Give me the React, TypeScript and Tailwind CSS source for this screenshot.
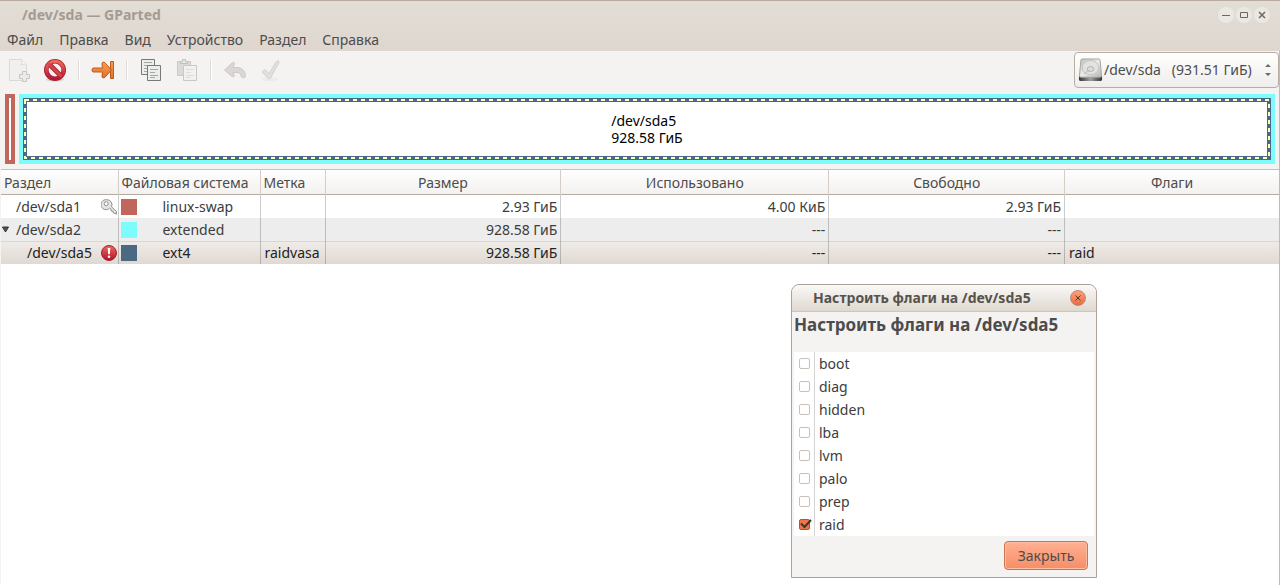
import { useState, type ReactNode } from 'react'

interface Partition {
  name: string
  fs: string
  color: string
  label: string
  size: string
  used: string
  free: string
  flags: string
  indent: string
  rowClass: string
  status?: 'locked' | 'error'
  expanded?: boolean
}

const menuItems = ['Файл', 'Правка', 'Вид', 'Устройство', 'Раздел', 'Справка']

const columns = [
  { title: 'Раздел', width: 'w-[117px]', align: 'text-left' },
  { title: 'Файловая система', width: 'w-[142px]', align: 'text-left' },
  { title: 'Метка', width: 'w-[65px]', align: 'text-left' },
  { title: 'Размер', width: 'w-[22%]', align: 'text-center' },
  { title: 'Использовано', width: 'w-[25%]', align: 'text-center' },
  { title: 'Свободно', width: 'w-[22%]', align: 'text-center' },
  { title: 'Флаги', width: 'w-[20%]', align: 'text-center' },
]

const partitions: Partition[] = [
  {
    name: '/dev/sda1',
    fs: 'linux-swap',
    color: 'bg-[#c1665a]',
    label: '',
    size: '2.93 ГиБ',
    used: '4.00 КиБ',
    free: '2.93 ГиБ',
    flags: '',
    indent: 'pl-[15px]',
    rowClass: 'bg-white',
    status: 'locked',
  },
  {
    name: '/dev/sda2',
    fs: 'extended',
    color: 'bg-[#7dfcfe]',
    label: '',
    size: '928.58 ГиБ',
    used: '---',
    free: '---',
    flags: '',
    indent: 'pl-1',
    rowClass: 'bg-[#ededed]',
    expanded: true,
  },
  {
    name: '/dev/sda5',
    fs: 'ext4',
    color: 'bg-[#4b6983]',
    label: 'raidvasa',
    size: '928.58 ГиБ',
    used: '---',
    free: '---',
    flags: 'raid',
    indent: 'pl-[26px]',
    rowClass: 'bg-linear-to-b from-[#f0ece8] to-[#e0d9d3] shadow-[inset_0_1px_0_#dcd6cd] text-[#222]',
    status: 'error',
  },
]

const flagNames = ['boot', 'diag', 'hidden', 'lba', 'lvm', 'palo', 'prep', 'raid']

function NewIcon() {
  return (
    <svg width="24" height="24" viewBox="0 0 24 24" fill="none" stroke="#dcdad8">
      <path d="M2.5 1.5h12l5 5v16h-17z" fill="#f1f0ef" />
      <path d="M14.5 1.5c1 2 .5 4-.5 5.500 2-1 4-1 5.500-.5" fill="#fafafa" />
      <path d="M15.500 13.500h4v3h3v4h-3v3h-4v-3h-3v-4h3z" fill="#ecebea" stroke="#c6c5c1" />
    </svg>
  )
}

function DeleteIcon() {
  return (
    <svg width="24" height="24" viewBox="0 0 24 24">
      <defs>
        <linearGradient id="ban" x1="0" y1="0" x2="0" y2="1">
          <stop offset="0" stopColor="#ee6a5a" />
          <stop offset="1" stopColor="#b51638" />
        </linearGradient>
      </defs>
      <ellipse cx="12" cy="21.500" rx="9" ry="2" fill="#d8d4d1" />
      <circle cx="12" cy="12" r="8.700" fill="#f4f1f0" stroke="#a82030" strokeWidth="4.600" />
      <path d="M6 6l12 12" stroke="#a82030" strokeWidth="4.600" />
      <circle cx="12" cy="12" r="8.700" fill="none" stroke="url(#ban)" strokeWidth="3" />
      <path d="M5.500 5.500l13 13" stroke="#d8424a" strokeWidth="3" />
    </svg>
  )
}

function ApplyResizeIcon() {
  return (
    <svg width="24" height="24" viewBox="0 0 24 24" stroke="#bf5a1c" strokeLinejoin="round">
      <defs>
        <linearGradient id="go" x1="0" y1="0" x2="0" y2="1">
          <stop offset="0" stopColor="#f5a04e" />
          <stop offset="1" stopColor="#e0702c" />
        </linearGradient>
      </defs>
      <path d="M19.500 3.500h3v17h-3z" fill="url(#go)" />
      <path
        d="M2 10h9.500l-.5-4c-.3-2 2-2.500 3-1.200L20.500 12 14 19.200c-1 1.300-3.300.8-3-1.200l.5-4H2c-1.300 0-1.300-4 0-4z"
        fill="url(#go)"
      />
    </svg>
  )
}

function CopyIcon() {
  return (
    <svg width="24" height="24" viewBox="0 0 24 24" fill="#eceeec" stroke="#777973">
      <path d="M2.500 1.500h13v15h-13z" />
      <path d="M5 4.500h8M5 7.500h8M5 10.500h4M5 13.500h4" stroke="#a5a7a3" />
      <path d="M8.500 7.500h13v15h-13z" />
      <path d="M11 11.500h8M11 14.500h5M11 17.500h8M11 19.500h5" stroke="#a5a7a3" />
    </svg>
  )
}

function PasteIcon() {
  return (
    <svg width="24" height="24" viewBox="0 0 24 24" fill="#dcd9d7" stroke="#cbc8c5">
      <path d="M2.500 3.500h13v14h-13z" />
      <path d="M5.500 5.500v-2h2v-2h3v2h2v2z" fill="#e9e7e5" stroke="#c0bdba" />
      <path d="M8.500 7.500h13v15h-13z" fill="#f2f1f0" stroke="#c9c8c5" />
      <path d="M11 11.500h8M11 14.500h5M11 17.500h8M11 19.500h5" stroke="#dedddb" />
    </svg>
  )
}

function UndoIcon() {
  return (
    <svg width="24" height="24" viewBox="0 0 24 24" fill="#dad6d4" stroke="#cdc9c6" strokeLinejoin="round">
      <path d="M1.500 12l8-7.500c2-.5 2.500 1 1.500 2.500L10 9.500h4c5 0 8 3.500 8.500 8 0 3-4 3-4.500.5-.5-2.500-1.500-3.500-4-3.500H10l1 2c1 1.500 0 3-2 2z" />
    </svg>
  )
}

function ApplyIcon() {
  return (
    <svg width="24" height="24" viewBox="0 0 24 24" fill="#e2e0de" stroke="#d3d0ce" strokeLinejoin="round">
      <ellipse cx="11" cy="21" rx="8" ry="2" fill="#ecebe9" stroke="none" />
      <path d="M3 14l3-2.500 4 4L17.500 3.500c1-1.500 3-.5 2.500 1L11.500 20c-.5 1-2 1-2.500.2z" />
    </svg>
  )
}

function DiskIcon() {
  return (
    <svg width="25" height="26" viewBox="0 0 26 26" aria-hidden="true">
      <defs>
        <linearGradient id="disk" x1="0" y1="0" x2="1" y2="1">
          <stop offset="0" stopColor="#bdbdbb" />
          <stop offset=".5" stopColor="#ececeb" />
          <stop offset="1" stopColor="#b4b4b2" />
        </linearGradient>
        <linearGradient id="base" x1="0" y1="0" x2="1" y2="0">
          <stop offset="0" stopColor="#333" />
          <stop offset=".5" stopColor="#a0a09e" />
          <stop offset="1" stopColor="#333" />
        </linearGradient>
      </defs>
      <path d="M1 19v4c0 1 .5 1.500 1.500 1.500h21c1 0 1.500-.5 1.500-1.500v-4z" fill="url(#base)" />
      <path d="M4.500 1.500h17c1 0 1.500.5 1.500 1.500l1.500 16c0 1-.5 1.500-1.500 1.500H3c-1 0-1.500-.5-1.500-1.500L3 3c0-1 .5-1.500 1.500-1.500z" fill="url(#disk)" stroke="#a3a3a1" />
      <ellipse cx="13" cy="10.500" rx="8.500" ry="7.500" fill="#e2e2e1" stroke="#c2c2c0" />
      <ellipse cx="13" cy="12" rx="3.500" ry="2.500" fill="#ddd" stroke="#b0b0ae" />
      <path d="M6 17l6-4" stroke="#bbb" />
    </svg>
  )
}

function KeyIcon() {
  return (
    <svg width="16" height="16" viewBox="0 0 16 16" role="img" aria-label="locked">
      <path
        d="M5.500.7a5 5 0 1 0 3 8.500l1.500 1 .2 1.800 1.800.2.300 1.800 1.700.3 1.300 1 .2-2.800-5-4.700A5 5 0 0 0 5.500.7z"
        fill="#e6e6e5"
        stroke="#8f8f8c"
      />
      <circle cx="5.200" cy="4.700" r="2" fill="#fff" stroke="#8f8f8c" />
    </svg>
  )
}

function ErrorIcon() {
  return (
    <svg width="16" height="16" viewBox="0 0 16 16" role="img" aria-label="error">
      <defs>
        <linearGradient id="err" x1="0" y1="0" x2="0" y2="1">
          <stop offset="0" stopColor="#ef6a60" />
          <stop offset="1" stopColor="#b3102b" />
        </linearGradient>
      </defs>
      <circle cx="8" cy="8" r="7.500" fill="url(#err)" stroke="#a3252d" />
      <path d="M6.700 3h2.600l-.5 6.200H7.200z" fill="#fff" />
      <circle cx="8" cy="11.700" r="1.300" fill="#fff" />
    </svg>
  )
}

function ToolButton({ label, disabled, children }: { label: string; disabled?: boolean; children: ReactNode }) {
  return (
    <button type="button" aria-label={label} disabled={disabled} className="p-1.5">
      {children}
    </button>
  )
}

function Separator() {
  return <div className="mx-[5px] h-5 w-0.5 border-r border-l border-r-white border-l-[#dedad7]" />
}

function WindowButton({ label, children }: { label: string; children: ReactNode }) {
  return (
    <button
      type="button"
      aria-label={label}
      className="flex size-4 items-center justify-center rounded-full bg-[#ebe7e2]"
    >
      <svg width="8" height="8" viewBox="0 0 8 8" fill="none" stroke="#6d6861">
        {children}
      </svg>
    </button>
  )
}

function Toolbar() {
  return (
    <div className="flex items-center justify-between py-px">
      <div className="flex items-center">
        <ToolButton label="Новый" disabled>
          <NewIcon />
        </ToolButton>
        <ToolButton label="Удалить">
          <DeleteIcon />
        </ToolButton>
        <Separator />
        <ToolButton label="Изменить размер">
          <ApplyResizeIcon />
        </ToolButton>
        <Separator />
        <ToolButton label="Копировать">
          <CopyIcon />
        </ToolButton>
        <ToolButton label="Вставить" disabled>
          <PasteIcon />
        </ToolButton>
        <Separator />
        <ToolButton label="Отменить" disabled>
          <UndoIcon />
        </ToolButton>
        <ToolButton label="Применить" disabled>
          <ApplyIcon />
        </ToolButton>
      </div>
      <div className="flex h-9 items-center rounded border border-[#b9aca1] bg-linear-to-b from-white to-[#efedeb] pr-1.5 pl-[3px]">
        <DiskIcon />
        <select aria-label="Устройство" className="appearance-none pl-px whitespace-pre outline-none">
          <option>{'/dev/sda\u00a0\u00a0 (931.51 ГиБ)'}</option>
        </select>
        <svg width="8" height="14" viewBox="0 0 8 14" fill="#6b6b69" className="ml-3">
          <path d="M1 4L4 1l3 3zM1 10L4 13l3-3z" />
        </svg>
      </div>
    </div>
  )
}

function DiskMap() {
  return (
    <div className="flex h-[70px] gap-1 px-1">
      <div className="w-2.5 border-4 border-[#c1665a] bg-white" />
      <div className="flex flex-1 border-4 border-[#7dfcfe]">
        <div className="relative flex flex-1 items-center justify-center border-4 border-[#4b6983] bg-white text-black">
          {/* selection outline runs along the middle of the border */}
          <svg className="absolute -top-0.5 -left-0.5 h-[calc(100%+4px)] w-[calc(100%+4px)] overflow-visible">
            <rect width="100%" height="100%" fill="none" stroke="#ffffbe" strokeWidth="2" strokeDasharray="4 4" />
          </svg>
          <p className="leading-[17px]">
            /dev/sda5
            <br />
            928.58 ГиБ
          </p>
        </div>
      </div>
    </div>
  )
}

function PartitionTable() {
  return (
    <table className="w-full table-fixed border-collapse">
      <thead>
        <tr className="h-[26px] bg-linear-to-b from-white to-[#f3f1ef] shadow-[inset_0_1px_0_#c9beb3,inset_0_-1px_0_#b5aaa0]">
          {columns.map((col) => (
            <th
              key={col.title}
              className={`${col.width} ${col.align} border-r border-[#d5cec6] px-[3px] pt-0.5 font-normal whitespace-nowrap last:border-r-0`}
            >
              {col.title}
            </th>
          ))}
        </tr>
      </thead>
      <tbody className="text-[#3c3c3c]">
        {partitions.map((p) => (
          <tr key={p.name} className={`h-[23px] ${p.rowClass}`}>
            <td className="border-r border-black/20 p-0">
              <div className={`flex items-center pr-px ${p.indent}`}>
                {p.expanded && (
                  <button type="button" aria-label="Свернуть" className="-ml-1 w-[15px] pl-px">
                    <svg width="8" height="8" viewBox="0 0 8 8" fill="#555" stroke="#333">
                      <path d="M.5 1h6l-3 5z" />
                    </svg>
                  </button>
                )}
                <span className="flex-1">{p.name}</span>
                {p.status === 'locked' && <KeyIcon />}
                {p.status === 'error' && <ErrorIcon />}
              </div>
            </td>
            <td className="border-r border-black/20 p-0">
              <div className="flex items-center gap-[26px] pl-0.5">
                <span className={`size-4 ${p.color}`} />
                {p.fs}
              </div>
            </td>
            <td className="border-r border-black/20 py-0 pr-0 pl-1">{p.label}</td>
            <td className="border-r border-black/20 px-[3px] py-0 text-right">{p.size}</td>
            <td className="border-r border-black/20 px-[3px] py-0 text-right">{p.used}</td>
            <td className="border-r border-black/20 px-[3px] py-0 text-right">{p.free}</td>
            <td className="px-1 py-0">{p.flags}</td>
          </tr>
        ))}
      </tbody>
    </table>
  )
}

function FlagsDialog({ onClose }: { onClose: () => void }) {
  const [checked, setChecked] = useState<string[]>(['raid'])

  const toggle = (flag: string) => {
    setChecked(checked.includes(flag) ? checked.filter((f) => f !== flag) : [...checked, flag])
  }

  return (
    <div
      role="dialog"
      aria-labelledby="flags-title"
      className="absolute top-[284px] left-[791px] w-[306px] rounded-t-lg border border-[#ada297] bg-[#f5f3f2]"
    >
      <div className="flex h-[27px] items-center justify-between rounded-t-lg border-b border-[#cfc5ba] bg-linear-to-b from-[#faf9f7] to-[#dfd8cf] pr-2.5 pl-[21px]">
        <span className="font-bold text-[#56524c]">Настроить флаги на /dev/sda5</span>
        <button
          type="button"
          aria-label="Закрыть окно"
          onClick={onClose}
          className="flex size-4 items-center justify-center rounded-full border border-[#b98a78] bg-linear-to-b from-[#f9a07c] to-[#ec6a3e]"
        >
          <svg width="6" height="6" viewBox="0 0 6 6" stroke="#5c3425">
            <path d="M.5.5l5 5M5.500.5l-5 5" />
          </svg>
        </button>
      </div>
      <h2 id="flags-title" className="h-10 px-0.5 text-[17px] leading-[26px] font-bold">
        Настроить флаги на /dev/sda5
      </h2>
      <ul className="mx-0.5 bg-white text-[#3c3c3c]">
        {flagNames.map((flag) => (
          <li key={flag}>
            <label className="flex h-[23px] items-center">
              <span className="flex h-full w-[21px] items-center border-r border-[#d4d4d4] pl-[5px]">
                <span className="relative flex">
                  <input
                    type="checkbox"
                    checked={checked.includes(flag)}
                    onChange={() => toggle(flag)}
                    className="size-[11px] appearance-none rounded-xs border border-[#c9c0b7] bg-white checked:border-[#b9532f] checked:bg-[#f0764a]"
                  />
                  {checked.includes(flag) && (
                    <svg
                      width="13"
                      height="11"
                      viewBox="0 0 13 11"
                      fill="none"
                      stroke="#3a3633"
                      strokeWidth="2"
                      className="pointer-events-none absolute top-0 left-0"
                    >
                      <path d="M2 4.500l3.500 3.500L12 1" />
                    </svg>
                  )}
                </span>
              </span>
              <span className="pl-1">{flag}</span>
            </label>
          </li>
        ))}
      </ul>
      <div className="flex justify-end px-2 pt-[5px] pb-[7px]">
        <button
          type="button"
          onClick={onClose}
          className="h-[29px] w-[84px] rounded border border-[#c9734f] bg-linear-to-b from-[#ffb092] to-[#f58e66] shadow-[inset_0_0_0_1px_#ffbda3]"
        >
          Закрыть
        </button>
      </div>
    </div>
  )
}

export default function App() {
  const [dialogOpen, setDialogOpen] = useState(true)

  return (
    <div className="relative flex min-h-screen flex-col border-r border-[#c3bab1] bg-[#f5f3f2] pl-px font-['Noto_Sans','Open_Sans',sans-serif] text-sm leading-5 text-[#4c4c4c]">
      <header className="-mr-px -ml-px border-t border-[#b9aaa0] bg-linear-to-b from-[#e2ddd5] to-[#dfd7cf]">
        <div className="flex h-[27px] items-center justify-between pr-2.5 pl-[22px]">
          <h1 className="font-bold text-[#a19b94]">/dev/sda — GParted</h1>
          <div className="flex gap-0.5">
            <WindowButton label="Свернуть">
              <path d="M0 4.500h8" />
            </WindowButton>
            <WindowButton label="Развернуть">
              <path d="M.5 1.500h7v5h-7z" />
            </WindowButton>
            <WindowButton label="Закрыть">
              <path d="M1 1l6 6M7 1l-6 6" strokeWidth="1.500" />
            </WindowButton>
          </div>
        </div>
        <nav className="flex h-[23px] items-center gap-4 pl-[7px]">
          {menuItems.map((item) => (
            <button key={item} type="button">
              {item}
            </button>
          ))}
        </nav>
      </header>
      <Toolbar />
      <div className="py-[5px]">
        <DiskMap />
      </div>
      <main className="flex-1 bg-white">
        <PartitionTable />
      </main>
      {dialogOpen && <FlagsDialog onClose={() => setDialogOpen(false)} />}
    </div>
  )
}
